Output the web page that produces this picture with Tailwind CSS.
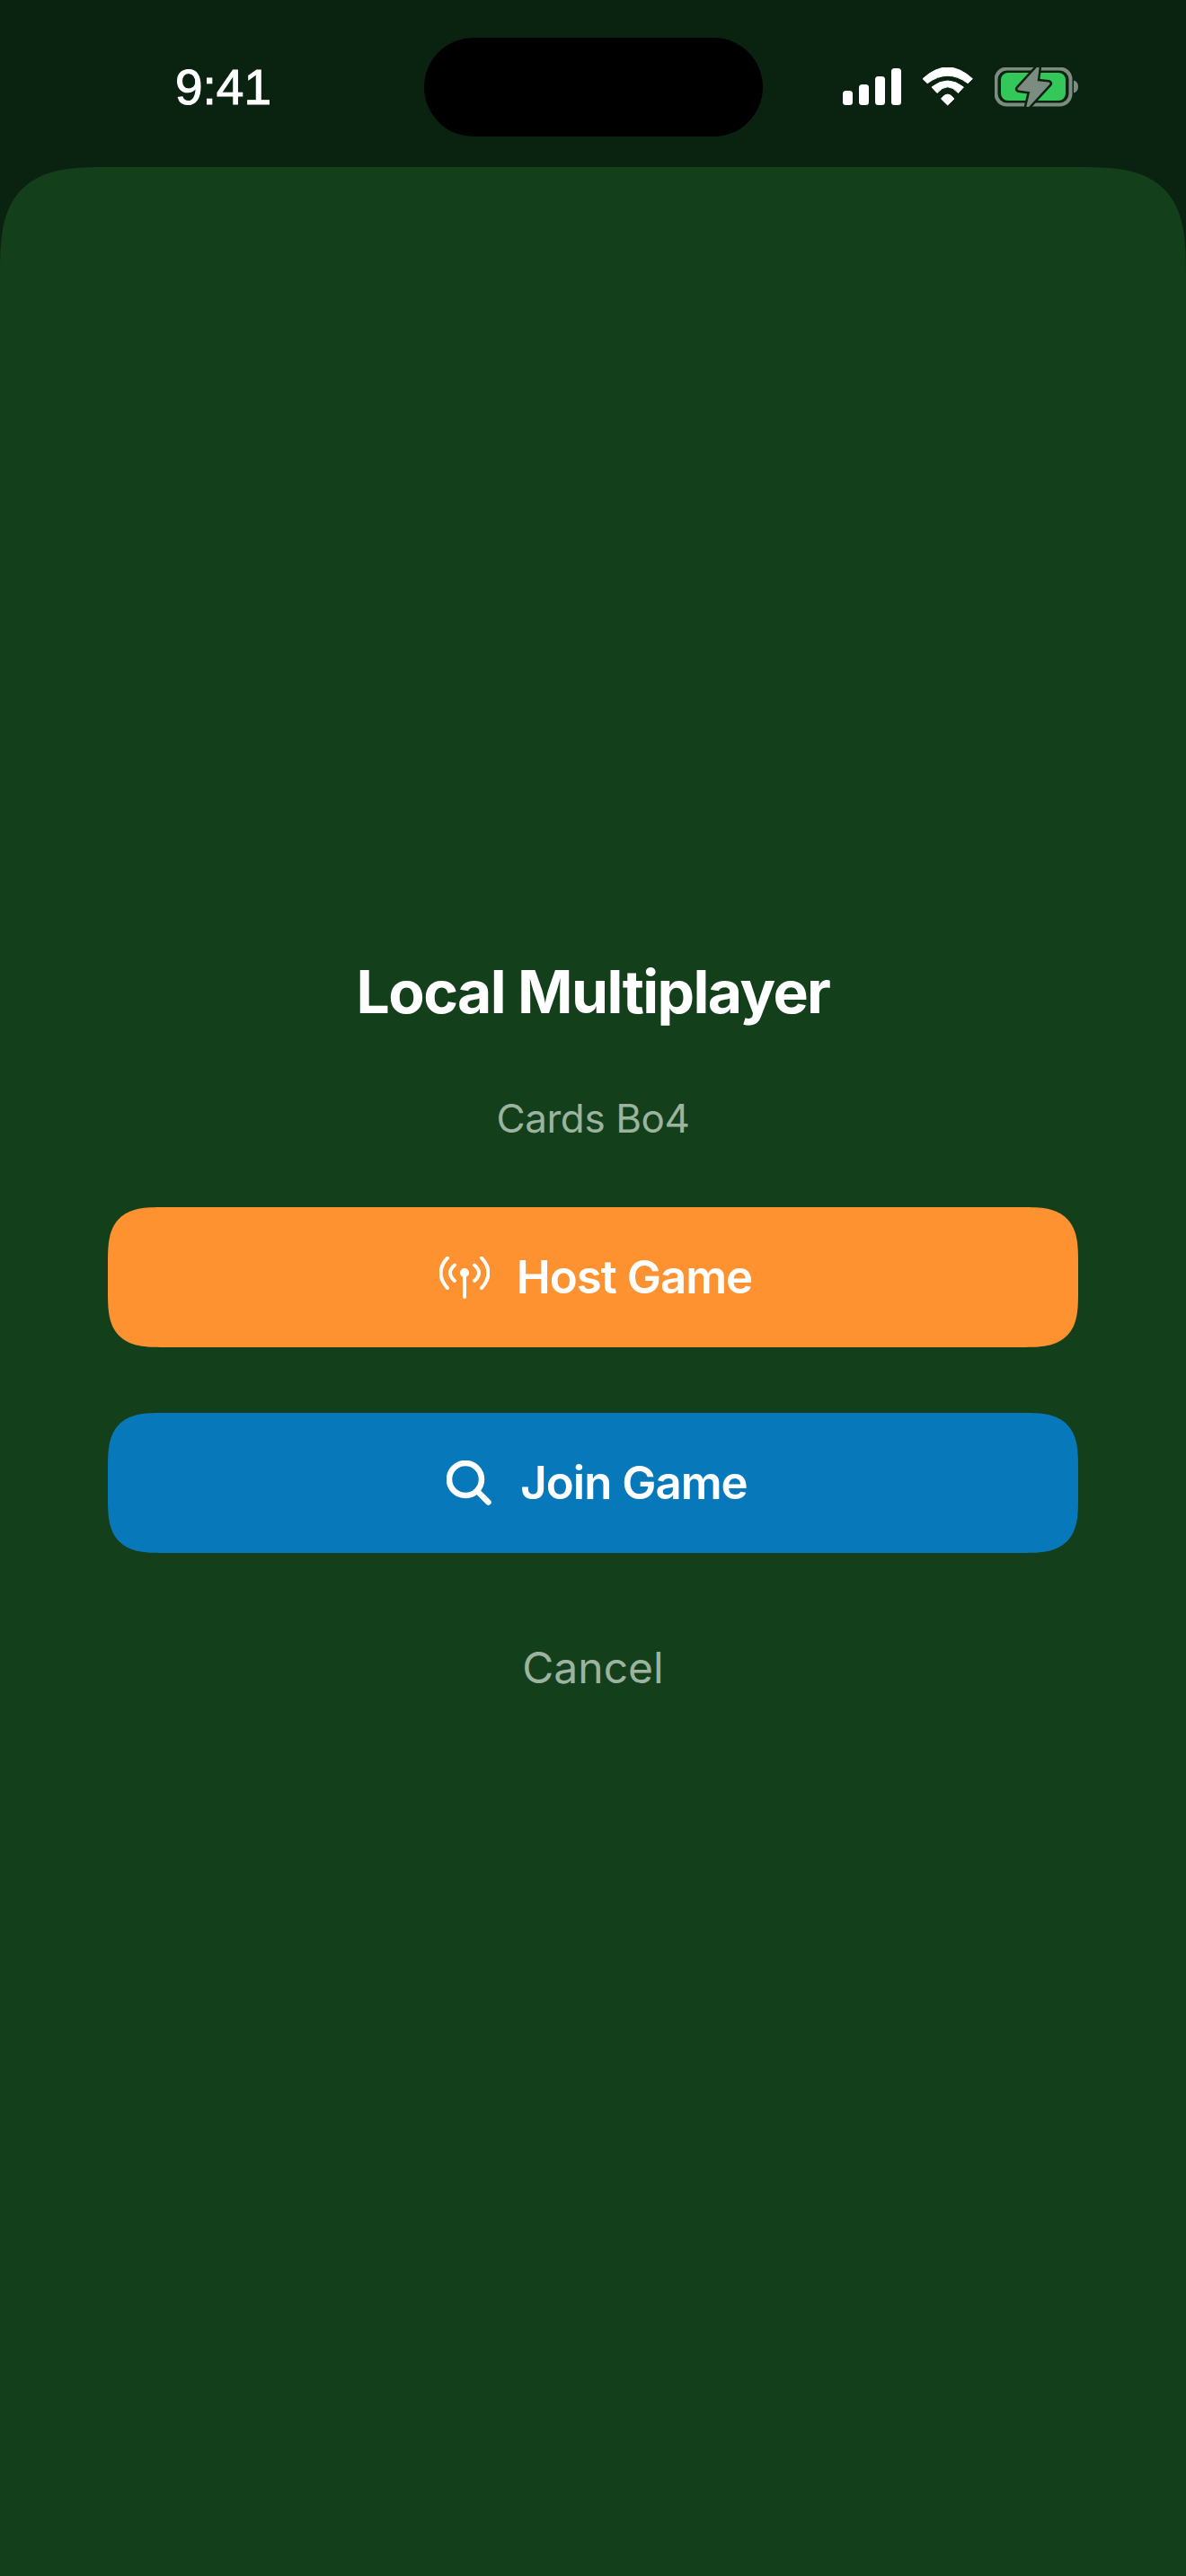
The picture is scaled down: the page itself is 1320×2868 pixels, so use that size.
<!DOCTYPE html>
<html lang="en">
<head>
  <meta charset="UTF-8" />
  <title>Local Multiplayer</title>
  <script src="https://cdn.jsdelivr.net/npm/@tailwindcss/browser@4"></script>
</head>
<body class="bg-[#0a2310] font-['Inter',sans-serif] text-white">
  <div class="w-[1320px] h-[2868px] flex flex-col overflow-hidden">

    <!-- Status bar -->
    <div class="h-[186px] shrink-0 relative">
      <div class="absolute left-[472px] top-[42px] w-[377px] h-[110px] rounded-full bg-black"></div>
      <div class="flex items-start pt-[69px] pl-[195px] pr-[120px] justify-between">
        <span class="font-['Liberation_Sans',sans-serif] text-[55px] leading-[56px] [-webkit-text-stroke:1px_white]">9:41</span>
        <div class="flex items-start">
          <svg class="mt-[7px]" width="65" height="41" viewBox="0 0 65 41" fill="#fff">
            <rect x="0" y="25" width="11" height="16" rx="3.5"/>
            <rect x="18" y="18" width="11" height="23" rx="3.5"/>
            <rect x="36" y="9" width="11" height="32" rx="3.5"/>
            <rect x="54" y="0" width="11" height="41" rx="3.5"/>
          </svg>
          <svg class="ml-[23px] mt-[6px]" width="58" height="43" viewBox="0 0 58 43" fill="#fff" stroke="#fff" stroke-linejoin="round">
            <path d="M1 12.7Q28.7 -12.7 56.4 12.7L51.2 17.7Q28.7 .9 6.2 17.7Z"/>
            <path d="M11 22Q28.7 8 46.4 22L40.5 28.5Q28.7 15 17 28.5Z"/>
            <path d="M21.5 35Q28.7 25 36 35L28.7 42Z"/>
          </svg>
          <svg class="ml-[23px] mt-[6px]" width="93" height="44" viewBox="0 0 93 44">
            <rect x="1.5" y="1.5" width="83" height="40" rx="12" fill="none" stroke="#7d8c80" stroke-width="4"/>
            <rect x="7" y="6" width="72" height="31" rx="8" fill="#34c759"/>
            <path d="M88 14.5Q93 16 93 21.5Q93 27 88 28.5Z" fill="#7d8c80"/>
            <path d="M48 1L27 24L41 26L37 43L60 18L46 16.5Z" fill="#7d8c80" stroke="#0a2310" stroke-width="8" stroke-linejoin="round"/>
            <path d="M48 1L27 24L41 26L37 43L60 18L46 16.5Z" fill="#7d8c80" stroke="#7d8c80" stroke-width="3" stroke-linejoin="round"/>
          </svg>
        </div>
      </div>
    </div>

    <!-- Sheet -->
    <div class="flex-1 bg-[#143f1b] rounded-t-[120px] [corner-shape:superellipse(1.6)] flex flex-col items-center px-[120px] pt-[878px]">
      <h1 class="text-[66px] leading-[80px] font-bold tracking-[-1.6px]">Local Multiplayer</h1>
      <p class="mt-[74px] text-[44px] leading-[54px] tracking-[-0.4px] text-[#9bb39f]">Cards Bo4</p>

      <button class="mt-[72px] w-full h-[156px] pl-[6px] rounded-[62px] [corner-shape:superellipse(1.6)] bg-[#ff9230] flex items-center justify-center gap-[30px]">
        <svg width="56" height="47" viewBox="0 0 56 47" fill="none" stroke="#fff" stroke-width="4" stroke-linecap="round">
          <path d="M9 1.5Q-6 18 9 35"/>
          <path d="M17 9.5Q7 18 17 27"/>
          <path d="M47 1.5Q62 18 47 35"/>
          <path d="M39 9.5Q49 18 39 27"/>
          <path d="M28 20V45"/>
          <circle cx="28" cy="18" r="3.6" fill="#fff" stroke-width="3"/>
        </svg>
        <span class="text-[51px] leading-[60px] font-semibold tracking-[-1px]">Host Game</span>
      </button>

      <button class="mt-[73px] w-full h-[156px] pl-[9px] rounded-[62px] [corner-shape:superellipse(1.6)] bg-[#0779bb] flex items-center justify-center gap-[32px]">
        <svg width="50" height="50" viewBox="0 0 50 50" fill="none" stroke="#fff" stroke-width="6.5" stroke-linecap="round">
          <circle cx="21" cy="21" r="18"/>
          <path d="M35 35L46.5 46.5"/>
        </svg>
        <span class="text-[51px] leading-[60px] font-semibold tracking-[-1px]">Join Game</span>
      </button>

      <button class="mt-[98px] text-[48px] leading-[60px] text-[#9bb39f]">Cancel</button>
    </div>
  </div>
</body>
</html>
